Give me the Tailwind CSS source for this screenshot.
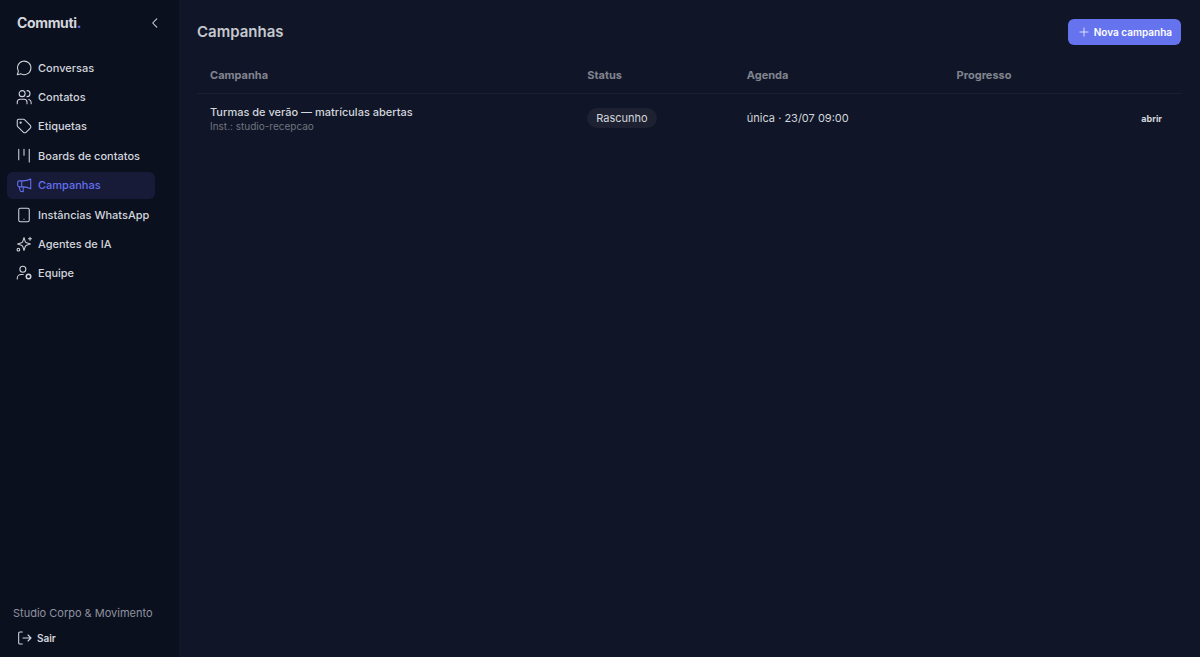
<!DOCTYPE html>
<html lang="pt-BR">
<head>
    <meta charset="UTF-8">
    <meta name="viewport" content="width=device-width, initial-scale=1.0">
    <title>Commuti - Campanhas</title>
    <script src="https://cdn.jsdelivr.net/npm/@tailwindcss/browser@4"></script>
</head>
<body class="flex min-h-screen bg-[#101627] font-['Inter',sans-serif] text-[11px] leading-4 text-[#d3d5dc]">

    <!-- Menu lateral -->
    <aside class="flex w-[179px] shrink-0 flex-col bg-[#0b101f]">
        <div class="flex items-center justify-between px-[17px] pt-[15px]">
            <a href="#" class="text-sm leading-4 font-bold tracking-tight">Commuti<span class="text-[#6470f0]">.</span></a>
            <button type="button" aria-label="Recolher menu">
                <svg class="size-[14px]" viewBox="0 0 24 24" fill="none" stroke="currentColor" stroke-width="1.8" stroke-linecap="round" stroke-linejoin="round"><path d="M15 5l-7 7l7 7"/></svg>
            </button>
        </div>

        <nav class="mt-[23px] mr-6 ml-[7px] flex h-[233px] flex-col justify-between font-medium whitespace-nowrap">
            <a href="#" class="flex h-[27px] items-center gap-[5px] rounded-md px-2">
                <svg class="size-[18px] shrink-0" viewBox="0 0 24 24" fill="none" stroke="currentColor" stroke-width="1.4" stroke-linecap="round" stroke-linejoin="round"><path d="M4.5 16.5a9 9 0 1 1 3.5 3.300L3 21z"/></svg>
                Conversas
            </a>
            <a href="#" class="flex h-[27px] items-center gap-[5px] rounded-md px-2">
                <svg class="size-[18px] shrink-0" viewBox="0 0 24 24" fill="none" stroke="currentColor" stroke-width="1.4" stroke-linecap="round" stroke-linejoin="round"><circle cx="9.5" cy="7.5" r="4"/><path d="M3 21v-2a4 4 0 0 1 4-4h5a4 4 0 0 1 4 4v2M16 3.5a4 4 0 0 1 0 8M21.5 21v-2a4 4 0 0 0-3-3.8"/></svg>
                Contatos
            </a>
            <a href="#" class="flex h-[27px] items-center gap-[5px] rounded-md px-2">
                <svg class="size-[18px] shrink-0" viewBox="0 0 24 24" fill="none" stroke="currentColor" stroke-width="1.4" stroke-linecap="round" stroke-linejoin="round"><circle cx="7.5" cy="7.5" r=".8"/><path d="M3 5v6.2c0 .6.2 1.1.6 1.5l7.7 7.7a2.4 2.4 0 0 0 3.4 0l5.7-5.7a2.4 2.4 0 0 0 0-3.4l-7.7-7.7a2 2 0 0 0-1.5-.6H5a2 2 0 0 0-2 2z"/></svg>
                Etiquetas
            </a>
            <a href="#" class="flex h-[27px] items-center gap-[5px] rounded-md px-2">
                <svg class="size-[18px] shrink-0" viewBox="0 0 24 24" fill="none" stroke="currentColor" stroke-width="1.4" stroke-linecap="round"><path d="M5 3v14M12 3v8M19 3v17"/></svg>
                Boards de contatos
            </a>
            <a href="#" aria-current="page" class="flex h-[27px] items-center gap-[5px] rounded-md bg-[#171b38] px-2 text-[#6470f0]">
                <svg class="size-[18px] shrink-0" viewBox="0 0 24 24" fill="none" stroke="currentColor" stroke-width="1.4" stroke-linecap="round" stroke-linejoin="round"><path d="M21 4v13c-3-1.5-6-2.5-10-2.5H6A2.5 2.5 0 0 1 3.5 12V9A2.5 2.5 0 0 1 6 6.5h5C15 6.5 18 5.5 21 4zM9 6.5v8M5.5 14.5l1.5 5a1.8 1.8 0 0 0 1.7 1.3H11v-6"/></svg>
                Campanhas
            </a>
            <a href="#" class="flex h-[27px] items-center gap-[5px] rounded-md px-2">
                <svg class="size-[18px] shrink-0" viewBox="0 0 24 24" fill="none" stroke="currentColor" stroke-width="1.4" stroke-linecap="round"><rect x="5" y="3" width="14" height="18" rx="2"/><path d="M12 17.5v.1"/></svg>
                Instâncias WhatsApp
            </a>
            <a href="#" class="flex h-[27px] items-center gap-[5px] rounded-md px-2">
                <svg class="size-[18px] shrink-0" viewBox="0 0 24 24" fill="none" stroke="currentColor" stroke-width="1.4" stroke-linecap="round" stroke-linejoin="round"><path d="M12 3.5l1.6 5.1a3 3 0 0 0 1.8 1.8L20.5 12l-5.1 1.6a3 3 0 0 0-1.8 1.8L12 20.5l-1.6-5.1a3 3 0 0 0-1.8-1.8L3.5 12l5.1-1.6a3 3 0 0 0 1.8-1.8zM20 3v4M18 5h4"/><circle cx="4.5" cy="19.5" r="1.8"/></svg>
                Agentes de IA
            </a>
            <a href="#" class="flex h-[27px] items-center gap-[5px] rounded-md px-2">
                <svg class="size-[18px] shrink-0" viewBox="0 0 24 24" fill="none" stroke="currentColor" stroke-width="1.4" stroke-linecap="round"><circle cx="10.5" cy="7" r="4"/><path d="M3 20v-1a5 5 0 0 1 5-5h3"/><circle cx="18" cy="16.5" r="3" stroke-width="2"/></svg>
                Equipe
            </a>
        </nav>

        <div class="mt-auto px-[13px] pb-[11px]">
            <p class="text-[#8f929f]">Studio Corpo &amp; Movimento</p>
            <button type="button" class="mt-[9px] ml-1 flex items-center gap-1 text-[10px] leading-4 font-semibold">
                <svg class="size-4" viewBox="0 0 24 24" fill="none" stroke="currentColor" stroke-width="1.6" stroke-linecap="round" stroke-linejoin="round"><path d="M8 3H4.5A2 2 0 0 0 2.5 5v14a2 2 0 0 0 2 2H8M9 12h12M16.5 7.5L21 12l-4.5 4.5"/></svg>
                Sair
            </button>
        </div>
    </aside>

    <!-- Lista de campanhas -->
    <main class="min-w-0 flex-1 px-[18px] pt-[19px]">
        <div class="flex items-center justify-between pr-[1px]">
            <h1 class="text-[15px] leading-[26px] font-semibold text-[#c6c8d0]">Campanhas</h1>
            <button type="button" class="flex h-[26px] items-center gap-[3px] rounded-md bg-[#6673ef] px-[9px] text-[10px] leading-4 font-semibold text-white">
                <svg class="size-[14px]" viewBox="0 0 24 24" fill="none" stroke="currentColor" stroke-width="1.3" stroke-linecap="round"><path d="M12 5v14M5 12h14"/></svg>
                Nova campanha
            </button>
        </div>

        <table class="mt-3 w-full table-fixed text-left">
            <thead>
                <tr class="h-9 border-b border-[#1a2031] text-[#81848f]">
                    <th class="w-[38.3%] px-[13px] font-bold">Campanha</th>
                    <th class="w-[16.2%] px-[13px] font-bold">Status</th>
                    <th class="w-[21.3%] px-[13px] font-bold">Agenda</th>
                    <th class="px-[13px] font-bold">Progresso</th>
                    <th class="w-[10%] px-[13px]"></th>
                </tr>
            </thead>
            <tbody>
                <tr class="h-[50px]">
                    <td class="px-[13px]">
                        <p class="font-medium">Turmas de verão — matrículas abertas</p>
                        <p class="text-[10px] leading-3 text-[#717480]">Inst.: studio-recepcao</p>
                    </td>
                    <td class="px-[13px]"><span class="inline-block rounded-full bg-[#1d2131] px-[9px] py-[2px]">Rascunho</span></td>
                    <td class="px-[13px]">única · 23/07 09:00</td>
                    <td class="px-[13px]"></td>
                    <td class="pr-5 pl-[13px] text-right"><a href="#" class="text-[9px] font-bold">abrir</a></td>
                </tr>
            </tbody>
        </table>
    </main>

</body>
</html>
